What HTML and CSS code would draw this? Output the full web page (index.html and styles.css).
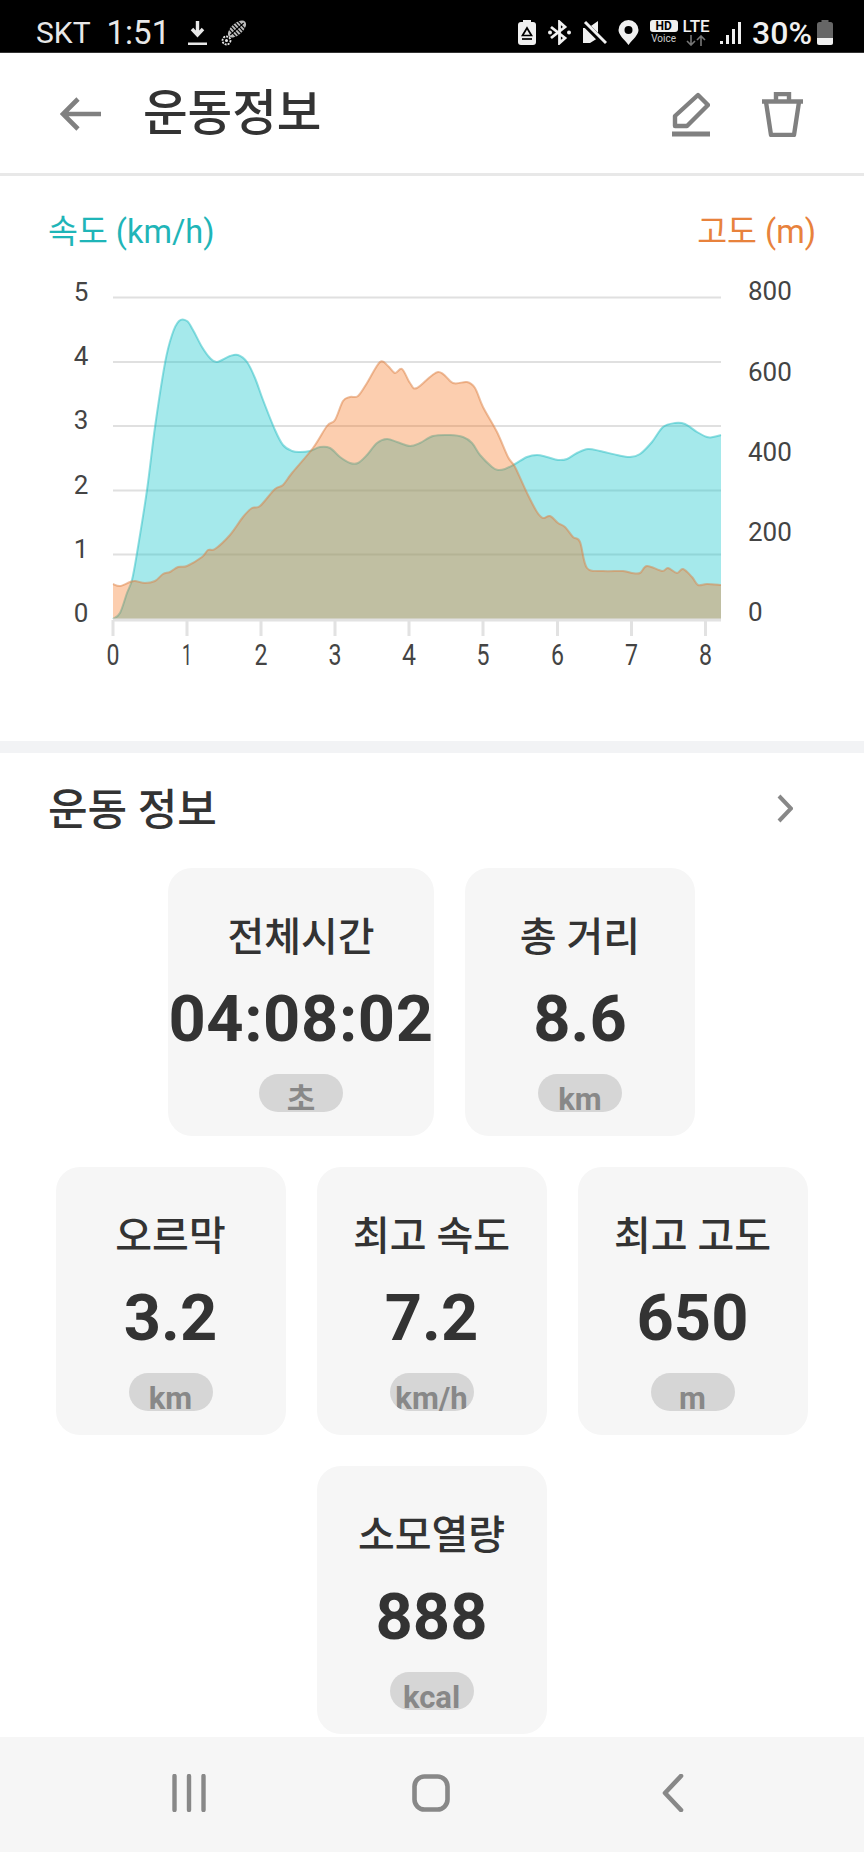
FILE: index.html

```html
<!DOCTYPE html>
<html lang="ko">
<head>
  <meta charset="UTF-8" />
  <meta name="viewport" content="width=device-width, initial-scale=1.0" />
  <title>운동정보</title>
  <link rel="stylesheet" href="styles.css">
</head>
<body>
  <div class="status-bar">
    <span class="status-text">SKT</span>
    <span class="status-text status-clock">1:51</span>
    <svg class="status-download" width="19" height="26" viewBox="0 0 19 26">
      <path d="M9.5 1v13M4 9l5.5 6L15 9" fill="none" stroke="#e8e8e8" stroke-width="3.4"/>
      <rect x="0" y="22.5" width="19" height="2.5" fill="#e8e8e8"/>
    </svg>
    <svg class="status-shoe" width="27" height="27" viewBox="0 0 27 27">
      <g transform="rotate(-42 16 10)">
        <ellipse cx="16" cy="10" rx="11" ry="5.8" fill="#bbb"/>
        <path d="M7 10h18M10 5v10M13 4.500v11M16 4v12M19 4.500v11M22 5v10" stroke="#000" stroke-width="1.1"/>
      </g>
      <circle cx="5.500" cy="21.500" r="4" fill="none" stroke="#e8e8e8" stroke-width="1.8" stroke-dasharray="2 1"/>
      <circle cx="5.500" cy="21.500" r="1.500" fill="#e8e8e8"/>
    </svg>

    <div class="status-right">
      <svg width="18" height="25" viewBox="0 0 18 25">
        <rect x="5" y="0" width="8" height="3" fill="#f0f0f0"/>
        <rect x="0" y="2" width="18" height="23" rx="3" fill="#f0f0f0"/>
        <path d="M9 8l4.500 7.500H4.500z" fill="none" stroke="#000" stroke-width="1.700"/>
        <path d="M4 19h10" stroke="#000" stroke-width="1.700"/>
      </svg>
      <svg width="25" height="25" viewBox="0 0 25 25">
        <path d="M4 7l14 11-5.500 5V2L18 7 4 18" fill="none" stroke="#f0f0f0" stroke-width="2.800"/>
        <circle cx="22" cy="12.500" r="2" fill="#f0f0f0"/>
        <circle cx="3" cy="12.500" r="2" fill="#f0f0f0"/>
      </svg>
      <svg width="24" height="25" viewBox="0 0 24 25">
        <path d="M0 8h5l10-7v17l-8 5H0z" fill="#f0f0f0"/>
        <path d="M1 3l21 21" stroke="#000" stroke-width="6"/>
        <path d="M2 2l21 21" stroke="#f0f0f0" stroke-width="3"/>
      </svg>
      <svg width="21" height="25" viewBox="0 0 21 25">
        <path d="M10.500 25C6 19 .5 15 .5 10a10 10 0 0 1 20 0c0 5-5.500 9-10 15z" fill="#f0f0f0"/>
        <circle cx="10.500" cy="10" r="4" fill="#000"/>
      </svg>
      <div class="status-hd">
        <span class="hd-box">HD</span>
        <span class="hd-voice">Voice</span>
      </div>
      <div class="status-lte">
        <span class="lte-label">LTE</span>
        <svg width="22" height="11" viewBox="0 0 22 11">
          <path d="M6 0v10M2 6l4 4 4-4M16 11V1M12 5l4-4 4 4" fill="none" stroke="#777" stroke-width="1.600"/>
        </svg>
      </div>
      <svg width="21" height="24" viewBox="0 0 21 24">
        <rect x="0" y="20" width="3" height="3" fill="#f0f0f0"/>
        <rect x="6" y="14" width="3" height="9" fill="#f0f0f0"/>
        <rect x="12" y="8" width="3" height="15" fill="#f0f0f0"/>
        <rect x="18" y="1" width="3" height="22" fill="#f0f0f0"/>
      </svg>
      <span class="status-text status-battery-text">30%</span>
      <svg class="status-battery" width="16" height="25" viewBox="0 0 16 25">
        <rect x="4.500" y="0" width="7" height="3" fill="#666"/>
        <rect x="0" y="2" width="16" height="23" rx="2.500" fill="#666"/>
        <path d="M0 18h16v4.500a2.500 2.500 0 0 1-2.500 2.500h-11A2.500 2.500 0 0 1 0 22.500z" fill="#f0f0f0"/>
      </svg>
    </div>
  </div>

  <div class="app-header">
    <svg class="back-icon" width="42" height="34" viewBox="0 0 42 34">
      <path d="M41 17H4M18 2L3 17l15 15" fill="none" stroke="#808080" stroke-width="4.600"/>
    </svg>
    <h1 class="app-title">운동정보</h1>
    <svg class="edit-icon" width="38" height="45" viewBox="0 0 38 45">
      <path d="M3 24L26 3l10 10-21 21H3z" fill="none" stroke="#808080" stroke-width="4.400" stroke-linejoin="round"/>
      <rect x="0" y="39.500" width="38" height="5" fill="#808080"/>
    </svg>
    <svg class="trash-icon" width="41" height="45" viewBox="0 0 41 45">
      <path d="M14 9V2h13v7" fill="none" stroke="#808080" stroke-width="4.400"/>
      <path d="M0 9.500h41" stroke="#808080" stroke-width="4.400"/>
      <path d="M4 10l5 33h23l5-33" fill="none" stroke="#808080" stroke-width="4.400" stroke-linejoin="round"/>
    </svg>
  </div>

  <div class="chart-section">
    <div class="chart-legend">
      <span class="legend-speed">속도 (km/h)</span>
      <span class="legend-height">고도 (m)</span>
    </div>
    <!-- viewBox keeps page coordinates, the chart is a free canvas -->
    <svg class="chart" width="864" height="480" viewBox="0 260 864 480">
      <g class="grid">
        <path d="M113 297.500H721M113 362H721M113 426H721M113 490.500H721M113 554.500H721"/>
      </g>
      <path class="area-speed" id="areaSpeed"/>
      <path class="line-speed" id="lineSpeed"/>
      <path class="area-height" id="areaHeight"/>
      <path class="line-height" id="lineHeight"/>
      <g class="axis">
        <path d="M113 620H721"/>
        <path d="M113 620v16M187 620v16M261 620v16M335 620v16M409 620v16M483 620v16M557.500 620v16M631.500 620v16M705.500 620v16"/>
      </g>
      <g class="tick-left">
        <text x="81" y="301">5</text>
        <text x="81" y="365">4</text>
        <text x="81" y="429">3</text>
        <text x="81" y="494">2</text>
        <text x="81" y="558">1</text>
        <text x="81" y="622">0</text>
      </g>
      <g class="tick-right">
        <text x="748" y="300">800</text>
        <text x="748" y="381">600</text>
        <text x="748" y="461">400</text>
        <text x="748" y="541">200</text>
        <text x="748" y="621">0</text>
      </g>
      <g class="tick-bottom">
        <text x="113" y="665" textLength="13" lengthAdjust="spacingAndGlyphs">0</text>
        <text x="187" y="665" textLength="10" lengthAdjust="spacingAndGlyphs">1</text>
        <text x="261" y="665" textLength="13" lengthAdjust="spacingAndGlyphs">2</text>
        <text x="335" y="665" textLength="13" lengthAdjust="spacingAndGlyphs">3</text>
        <text x="409" y="665" textLength="14" lengthAdjust="spacingAndGlyphs">4</text>
        <text x="483" y="665" textLength="13" lengthAdjust="spacingAndGlyphs">5</text>
        <text x="557.500" y="665" textLength="13" lengthAdjust="spacingAndGlyphs">6</text>
        <text x="631.500" y="665" textLength="13" lengthAdjust="spacingAndGlyphs">7</text>
        <text x="705.500" y="665" textLength="13" lengthAdjust="spacingAndGlyphs">8</text>
      </g>
    </svg>
  </div>

  <div class="band"></div>

  <div class="info-section">
    <div class="info-head">
      <h2 class="info-title">운동 정보</h2>
      <svg class="info-more" width="16" height="29" viewBox="0 0 16 29">
        <path d="M2 2l12 12.500L2 27" fill="none" stroke="#888" stroke-width="4"/>
      </svg>
    </div>

    <div class="stat-row">
      <div class="stat-card stat-card-wide">
        <div class="stat-label">전체시간</div>
        <div class="stat-value">04:08:02</div>
        <div class="stat-unit">초</div>
      </div>
      <div class="stat-card">
        <div class="stat-label">총 거리</div>
        <div class="stat-value">8.6</div>
        <div class="stat-unit">km</div>
      </div>
    </div>
    <div class="stat-row">
      <div class="stat-card">
        <div class="stat-label">오르막</div>
        <div class="stat-value">3.2</div>
        <div class="stat-unit">km</div>
      </div>
      <div class="stat-card">
        <div class="stat-label">최고 속도</div>
        <div class="stat-value">7.2</div>
        <div class="stat-unit">km/h</div>
      </div>
      <div class="stat-card">
        <div class="stat-label">최고 고도</div>
        <div class="stat-value">650</div>
        <div class="stat-unit">m</div>
      </div>
    </div>
    <div class="stat-row">
      <div class="stat-card">
        <div class="stat-label">소모열량</div>
        <div class="stat-value">888</div>
        <div class="stat-unit">kcal</div>
      </div>
    </div>
  </div>

  <div class="nav-bar">
    <svg width="34" height="38" viewBox="0 0 34 38">
      <path d="M2.500 2v34M17 2v34M31.500 2v34" stroke="#888" stroke-width="4.400" stroke-linecap="round"/>
    </svg>
    <svg width="38" height="38" viewBox="0 0 38 38">
      <rect x="2.500" y="2.500" width="33" height="33" rx="10" fill="none" stroke="#888" stroke-width="4.600"/>
    </svg>
    <svg width="22" height="38" viewBox="0 0 22 38">
      <path d="M19 2L3 19l16 17" fill="none" stroke="#888" stroke-width="4.600" stroke-linecap="round" stroke-linejoin="round"/>
    </svg>
  </div>

  <script src="chart.js"></script>
</body>
</html>
```

FILE: styles.css

```css
* {
  box-sizing: border-box;
}
html, body {
  margin: 0;
  padding: 0;
}
body {
  width: 864px;
  height: 1852px;
  overflow: hidden;
  display: flex;
  flex-direction: column;
  background: #fff;
  color: #333;
  font-family: Roboto, "Noto Sans CJK KR", sans-serif;
}
svg {
  display: block;
  flex: none;
}

/* status bar */
.status-bar {
  height: 53px;
  flex: none;
  display: flex;
  align-items: center;
  padding: 13px 31px 0 36px;
  background: #000;
  border-bottom: 1px solid #333;
}
.status-text {
  font-size: 30px;
  line-height: 40px;
  color: #e8e8e8;
}
.status-clock {
  margin-left: 16px;
  font-size: 33px;
}
.status-download {
  margin-left: 18px;
}
.status-shoe {
  margin-left: 14px;
}
.status-right {
  margin-left: auto;
  display: flex;
  align-items: center;
  gap: 11px;
}
.status-hd {
  width: 27px;
  display: flex;
  flex-direction: column;
  align-items: center;
}
.hd-box {
  width: 28px;
  height: 12px;
  background: #f0f0f0;
  border-radius: 3px;
  color: #000;
  font-size: 12px;
  line-height: 12px;
  font-weight: 700;
  text-align: center;
}
.hd-voice {
  margin-top: 1px;
  font-size: 10px;
  line-height: 12px;
  color: #ccc;
}
.status-lte {
  width: 26px;
  margin-left: -5px;
  display: flex;
  flex-direction: column;
  align-items: center;
}
.lte-label {
  font-size: 17px;
  line-height: 14px;
  font-weight: 500;
  color: #f0f0f0;
}
.status-lte svg {
  margin-top: 2px;
}
.status-battery-text {
  font-size: 32px;
  font-weight: 500;
  color: #f0f0f0;
}
.status-battery {
  margin-left: -6px;
}

/* header */
.app-header {
  height: 123px;
  flex: none;
  display: flex;
  align-items: center;
  padding: 2px 61px 0 60px;
  border-bottom: 3px solid #e8e8e8;
}
.app-title {
  margin: 0 0 0 41px;
  flex: 1;
  font-size: 48.5px;
  line-height: 60px;
  font-weight: 500;
  color: #333;
}
.trash-icon {
  margin-left: 52px;
}

/* chart */
.chart-section {
  height: 565px;
  flex: none;
}
.chart-legend {
  height: 84px;
  display: flex;
  justify-content: space-between;
  align-items: flex-start;
  padding: 34px 48px 0;
  font-size: 32.5px;
  line-height: 44px;
}
.legend-speed {
  color: #1fb5b8;
}
.legend-height {
  color: #e8823c;
}
.grid path {
  fill: none;
  stroke: #e0e0e0;
  stroke-width: 2;
}
.area-speed {
  fill: rgba(30, 200, 205, 0.4);
}
.line-speed {
  fill: none;
  stroke: rgba(40, 190, 195, 0.5);
  stroke-width: 2;
}
.area-height {
  fill: rgba(245, 110, 20, 0.34);
}
.line-height {
  fill: none;
  stroke: rgba(220, 130, 70, 0.5);
  stroke-width: 2;
}
.axis path {
  fill: none;
  stroke: #e2e2e2;
  stroke-width: 3;
}
.tick-left text,
.tick-right text {
  font-size: 26px;
  fill: #444;
}
.tick-left text {
  text-anchor: middle;
}
.tick-bottom text {
  font-size: 29px;
  fill: #444;
  text-anchor: middle;
}

.band {
  height: 12px;
  flex: none;
  background: #f2f3f5;
}

/* info cards */
.info-section {
  flex: 1;
  min-height: 0;
  overflow: hidden;
}
.info-head {
  display: flex;
  justify-content: space-between;
  align-items: center;
  padding: 27px 71px 0 48px;
  margin-bottom: 28px;
}
.info-title {
  margin: 0;
  font-size: 43px;
  line-height: 60px;
  font-weight: 500;
  color: #333;
}
.info-more {
  margin-bottom: 4px;
}
.stat-row {
  display: flex;
  justify-content: center;
  gap: 31px;
  margin-bottom: 31px;
  padding-right: 1px;
}
.stat-card {
  width: 230px;
  height: 268px;
  padding-top: 45px;
  display: flex;
  flex-direction: column;
  align-items: center;
  background: #f6f6f6;
  border-radius: 24px;
}
.stat-card-wide {
  width: 266px;
}
.stat-card-wide .stat-value {
  letter-spacing: 0.6px;
}
.stat-label {
  font-size: 40px;
  line-height: 50px;
  font-weight: 500;
  color: #333;
  white-space: nowrap;
}
.stat-value {
  margin-top: 23px;
  font-size: 65px;
  line-height: 66px;
  font-weight: 700;
  color: #333;
  white-space: nowrap;
}
.stat-unit {
  width: 84px;
  height: 38px;
  margin-top: 22px;
  padding-top: 7px;
  overflow: hidden;
  background: #d6d6d6;
  border-radius: 19px;
  font-size: 31px;
  line-height: 38px;
  font-weight: 700;
  color: #888;
  text-align: center;
  white-space: nowrap;
}

/* bottom nav */
.nav-bar {
  height: 115px;
  flex: none;
  display: flex;
  align-items: center;
  background: #f6f6f6;
  padding: 0 0 4px 172px;
  gap: 206px;
}
.nav-bar svg:last-child {
  margin-left: 6px;
}
```

FILE: chart.js

```js
const speed = [[113,619],[120,613],[127,593],[132,580],[137,553],[147,490],[155,427],[165,363],[172,335],[179,321],[187,321],[193,330],[202,347],[210,358],[217,362],[230,356],[238,355],[247,362],[255,378],[263,400],[275,430],[283,445],[292,451],[300,452],[310,451],[320,447],[330,448],[340,457],[350,463],[358,463],[367,455],[377,443],[387,439],[397,442],[410,446],[420,443],[433,436],[450,435],[463,437],[472,443],[480,455],[492,467],[498,470],[505,469],[515,464],[527,457],[537,455],[547,457],[558,460],[567,459],[577,453],[588,449],[600,451],[617,455],[630,457],[640,454],[652,442],[663,427],[675,423],[685,424],[697,432],[707,437],[713,437],[721,435]];

const height = [[113,584],[120,586],[130,582],[135,581],[145,583],[155,581],[163,574],[170,572],[178,567],[187,566],[202,557],[208,550],[215,549],[230,535],[243,517],[252,508],[260,506],[275,489],[283,485],[292,473],[313,448],[327,426],[335,420],[343,401],[350,397],[358,396],[367,383],[380,362],[388,366],[395,373],[402,369],[410,383],[417,388],[438,372],[453,383],[467,382],[475,388],[483,407],[497,432],[508,457],[515,467],[527,493],[537,512],[543,518],[550,516],[558,523],[565,527],[573,537],[580,542],[587,568],[603,571],[623,571],[632,573],[640,573],[647,566],[662,571],[668,568],[677,573],[683,569],[692,577],[698,585],[707,584],[721,585]];

const baseY = 619;

// catmull-rom through the points, as bezier segments
function smoothPath(pts) {
  let d = `M${pts[0][0]} ${pts[0][1]}`;
  for (let i = 0; i < pts.length - 1; i++) {
    const p0 = pts[i - 1] || pts[i];
    const p1 = pts[i];
    const p2 = pts[i + 1];
    const p3 = pts[i + 2] || p2;
    const c1x = p1[0] + (p2[0] - p0[0]) / 6;
    const c1y = p1[1] + (p2[1] - p0[1]) / 6;
    const c2x = p2[0] - (p3[0] - p1[0]) / 6;
    const c2y = p2[1] - (p3[1] - p1[1]) / 6;
    d += `C${c1x} ${c1y} ${c2x} ${c2y} ${p2[0]} ${p2[1]}`;
  }
  return d;
}

function drawSeries(pts, areaId, lineId) {
  const line = smoothPath(pts);
  const first = pts[0][0];
  const last = pts[pts.length - 1][0];
  document.getElementById(lineId).setAttribute("d", line);
  document.getElementById(areaId).setAttribute("d", `${line}L${last} ${baseY}L${first} ${baseY}Z`);
}

drawSeries(speed, "areaSpeed", "lineSpeed");
drawSeries(height, "areaHeight", "lineHeight");
```
